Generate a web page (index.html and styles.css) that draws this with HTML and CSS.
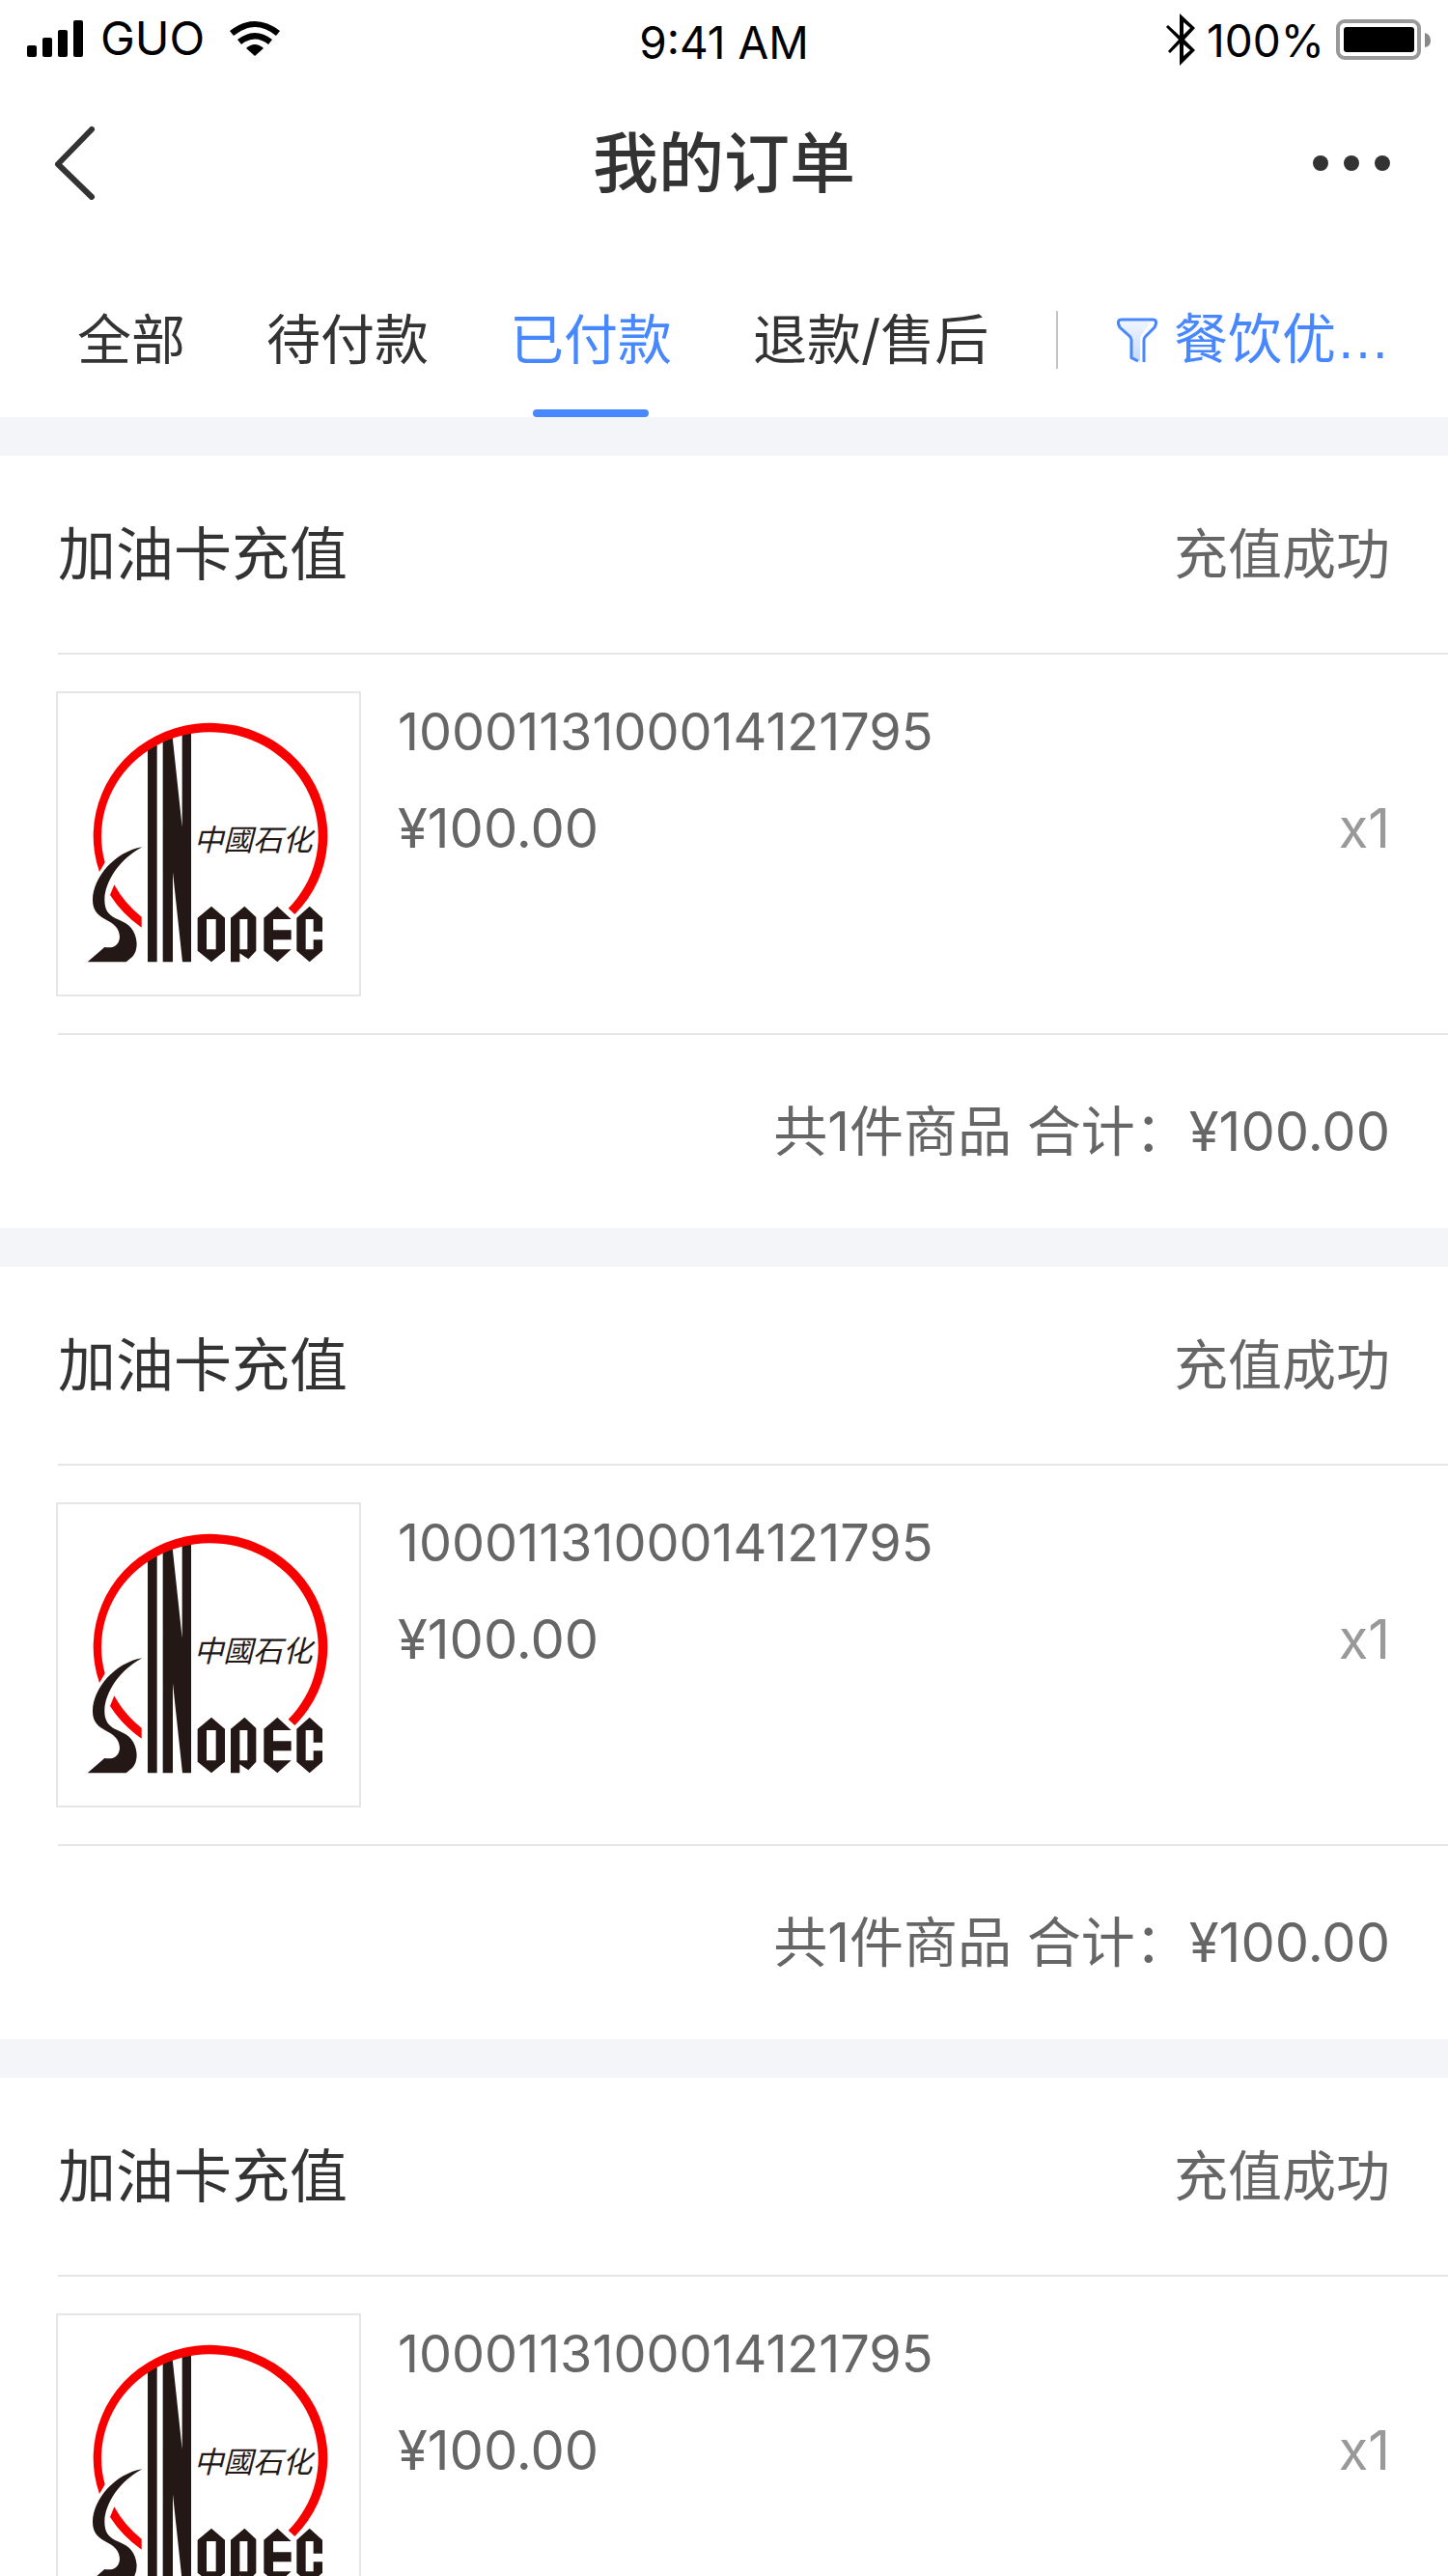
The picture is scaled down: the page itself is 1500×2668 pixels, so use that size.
FILE: index.html
```html
<!DOCTYPE html>
<html lang="zh-CN">
<head>
<meta charset="utf-8">
<meta name="viewport" content="width=device-width, initial-scale=1">
<title>我的订单</title>
<link rel="stylesheet" href="styles.css">
</head>
<body>
<svg class="defs" width="0" height="0" aria-hidden="true">
  <symbol id="sinopec" viewBox="60 54 936 936">
    <g fill="#231815">
      <path d="M339 230L368 214V889H339Z"/>
      <path d="M386 203L416 190L446 470V183L474 177V889H447L417 610V889H386Z"/>
      <path d="M322 532C240 545 168 625 168 697C168 725 180 742 205 755C235 770 252 785 252 812C250 835 235 848 205 843L152 889H272L292 872Q305 858 305 832C303 790 280 770 250 758C215 745 205 725 205 695C206 640 250 570 322 532Z"/>
      <path fill-rule="evenodd" d="M537 716L579 752V854L537 889L494 854V752ZM522 756V850H551V756Z"/>
      <path fill-rule="evenodd" d="M640 716L676 750V854L652 880L625 862V889H597V752ZM625 756V850H649V756Z"/>
      <path d="M742 716L785 756H729V790H785V820H729V850H785L742 889L700 854V752Z"/>
      <path d="M842 716L882 752V794H854V756H830V850H854V820H882V854L842 889L802 854V752Z"/>
    </g>
    <g fill="#f90000">
      <path d="M189 609A364 351 0 1 1 796 741L776 722A337 324 0 1 0 206 580Z"/>
      <path d="M235 649A337 324 0 0 0 320 749V782A364 351 0 0 1 222 681Z"/>
    </g>
    <text class="logo-script" x="482" y="542">中國石化</text>
  </symbol>
</svg>

<header class="top">
  <div class="status-bar">
    <div class="status-left">
      <svg width="58" height="38" viewBox="0 0 58 38" aria-hidden="true"><rect y="26" width="10" height="12" rx="2"/><rect x="16" y="18" width="10" height="20" rx="2"/><rect x="32" y="10" width="10" height="28" rx="2"/><rect x="48" width="10" height="38" rx="2"/></svg>
      <span>GUO</span>
      <svg class="wifi" width="52" height="36" viewBox="0 0 52 36" aria-hidden="true"><path d="M0 10Q26-10 52 10L48 15Q26-3 4 15Z"/><path d="M8 19Q26 5 44 19L40 24Q26 13 12 24Z"/><path d="M17 28Q26 20 35 28L26 36Z"/></svg>
    </div>
    <time class="clock">9:41 AM</time>
    <div class="status-right">
      <svg width="30" height="54" viewBox="0 0 30 54" aria-hidden="true"><path d="M14 0L30 15L19 27L30 38L14 54V31L4 41L2 39L13 27L0 14L2 12L14 23ZM18 9V22L25 15ZM18 32V44L25 38Z"/></svg>
      <span>100%</span>
      <svg class="battery" width="100" height="42" viewBox="0 0 100 42" aria-hidden="true"><rect x="2" y="2" width="84" height="38" rx="7" fill="none" stroke="#999" stroke-width="4"/><rect x="8" y="8" width="73" height="26" rx="3"/><path d="M92 14Q98 16 98 22T92 29Z" fill="#888"/></svg>
    </div>
  </div>
  <div class="nav-bar">
    <button class="icon-button" type="button" aria-label="返回"><svg width="44" height="76" viewBox="0 0 44 76" fill="none" stroke="#333" stroke-width="6" stroke-linecap="round" stroke-linejoin="round" aria-hidden="true"><path d="M39 3L4 39L39 73"/></svg></button>
    <h1>我的订单</h1>
    <button class="icon-button" type="button" aria-label="更多"><svg width="80" height="16" viewBox="0 0 80 16" fill="#333" aria-hidden="true"><circle cx="8" cy="8" r="8"/><circle cx="40" cy="8" r="8"/><circle cx="72" cy="8" r="8"/></svg></button>
  </div>
  <div class="toolbar">
    <nav class="tabs">
      <a href="#all">全部</a>
      <a href="#unpaid">待付款</a>
      <a class="active" href="#paid" aria-current="page">已付款</a>
      <a href="#refund">退款/售后</a>
    </nav>
    <button class="filter" type="button">
      <svg width="44" height="48" viewBox="0 0 44 48" aria-hidden="true"><defs><linearGradient id="funnel" x2="0" y2="1"><stop stop-color="#f2f6ff"/><stop offset="1" stop-color="#c6daff"/></linearGradient></defs><path d="M5 3H38L27 18Q25 20 25 24V46L15 42V23L4 11Z" fill="url(#funnel)"/><path d="M23 46L16 42.500V24Q16 22 14 20L4 11Q0 3 6 3H38Q44 3 40 11L31 20Q29 22 29 24V47" fill="none" stroke="#4787ff" stroke-width="3"/></svg>
      <span>餐饮优…</span>
    </button>
  </div>
</header>

<main class="orders">
  <article class="order">
    <header class="order-head"><h2>加油卡充值</h2><span>充值成功</span></header>
    <div class="order-item">
      <svg class="thumb" role="img" aria-label="Sinopec"><use href="#sinopec"/></svg>
      <div class="info"><p class="card-no">1000113100014121795</p><p class="price"><span>¥100.00</span><span class="count">x1</span></p></div>
    </div>
    <footer class="order-total">共1件商品 合计：¥100.00</footer>
  </article>
  <article class="order">
    <header class="order-head"><h2>加油卡充值</h2><span>充值成功</span></header>
    <div class="order-item">
      <svg class="thumb" role="img" aria-label="Sinopec"><use href="#sinopec"/></svg>
      <div class="info"><p class="card-no">1000113100014121795</p><p class="price"><span>¥100.00</span><span class="count">x1</span></p></div>
    </div>
    <footer class="order-total">共1件商品 合计：¥100.00</footer>
  </article>
  <article class="order">
    <header class="order-head"><h2>加油卡充值</h2><span>充值成功</span></header>
    <div class="order-item">
      <svg class="thumb" role="img" aria-label="Sinopec"><use href="#sinopec"/></svg>
      <div class="info"><p class="card-no">1000113100014121795</p><p class="price"><span>¥100.00</span><span class="count">x1</span></p></div>
    </div>
  </article>
</main>
</body>
</html>
```

FILE: styles.css
```css
* { box-sizing: border-box; }

html { height: 100%; }

body {
  margin: 0;
  height: 100%;
  display: flex;
  flex-direction: column;
  overflow: hidden;
  background: #f4f5f8;
  color: #333;
  font-family: Inter, "Noto Sans CJK SC", sans-serif;
  font-size: 56px;
  line-height: 80px;
}

h1, h2, p { margin: 0; font-weight: 400; }

svg { display: block; flex: none; }

button {
  border: 0;
  padding: 0;
  background: none;
  color: inherit;
  font: inherit;
  cursor: pointer;
}

.defs { position: absolute; }

.top { flex: none; background: #fff; }

/* Status bar */
.status-bar {
  display: grid;
  grid-template-columns: 1fr auto 1fr;
  align-items: start;
  height: 100px;
  padding: 12px 16px 0;
  color: #000;
  font-size: 46px;
  line-height: 56px;
}

.status-left, .status-right { display: flex; align-items: center; }
.status-left { gap: 18px; padding-left: 12px; font-size: 48px; }
.wifi { margin-left: 8px; }
.clock { padding-top: 4px; }
.status-right { justify-content: flex-end; gap: 12px; }
.status-right span { padding-top: 2px; }

/* Title row */
.nav-bar {
  display: grid;
  grid-template-columns: 1fr auto 1fr;
  align-items: center;
  height: 138px;
  padding: 0 56px;
}

.nav-bar h1 { font-size: 68px; font-weight: 500; line-height: 100px; }
.icon-button:last-child { justify-self: end; padding-right: 4px; }

/* Tabs and filter */
.toolbar {
  display: flex;
  justify-content: space-between;
  height: 194px;
  padding: 74px 60px 0 80px;
}

.tabs { display: flex; gap: 84px; }

.tabs a {
  position: relative;
  height: 120px;
  color: inherit;
  text-decoration: none;
  white-space: nowrap;
}

.tabs .active, .filter { color: #4787ff; }

.tabs .active::after {
  content: "";
  position: absolute;
  bottom: 0;
  left: calc(50% - 60px);
  width: 120px;
  height: 8px;
  border-radius: 4px;
  background: #4787ff;
}

.filter {
  display: flex;
  align-items: center;
  gap: 16px;
  height: 80px;
  white-space: nowrap;
  font-family: "Liberation Sans", "Noto Sans CJK SC", sans-serif;
}

.filter::before {
  content: "";
  width: 2px;
  height: 60px;
  margin-right: 44px;
  background: #c4c4c4;
}

/* Orders */
.orders {
  display: flex;
  flex: 1;
  flex-direction: column;
  gap: 40px;
  min-height: 0;
  padding-top: 40px;
  overflow: hidden;
}

.order { flex: none; padding-left: 60px; background: #fff; color: #666; }

.order-head {
  display: flex;
  align-items: center;
  justify-content: space-between;
  height: 206px;
  padding-right: 60px;
  border-bottom: 2px solid #e6e6e6;
}

.order-head h2 { color: #333; font-size: 60px; }

.order-item { display: flex; gap: 38px; padding: 38px 60px 38px 0; }

.thumb {
  width: 316px;
  height: 316px;
  margin-left: -2px;
  border: 2px solid #e6e6e6;
}

.logo-script { fill: #231815; font: italic 92px "Noto Sans CJK TC", sans-serif; }

.info { flex: 1; }
.info p { height: 100px; line-height: 84px; }
.card-no { font-size: 54px; }
.price { display: flex; justify-content: space-between; }
.count { color: #999; }

.order-total {
  height: 202px;
  padding-right: 60px;
  border-top: 2px solid #e6e6e6;
  line-height: 200px;
  text-align: right;
}
```
